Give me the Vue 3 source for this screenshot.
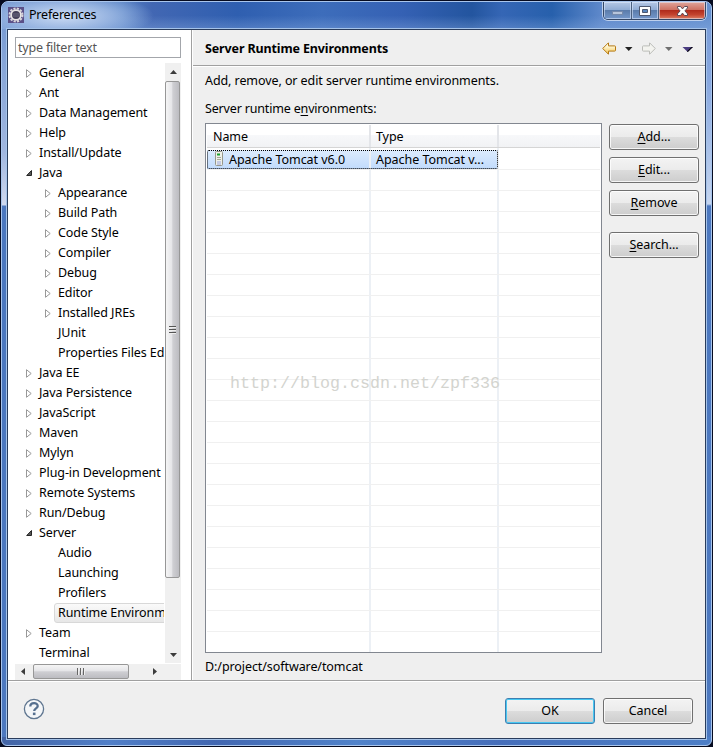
<script setup>
const tree = [
  { label: 'General', state: 'closed' },
  { label: 'Ant', state: 'closed' },
  { label: 'Data Management', state: 'closed' },
  { label: 'Help', state: 'closed' },
  { label: 'Install/Update', state: 'closed' },
  { label: 'Java', state: 'open' },
  { label: 'Appearance', state: 'closed', child: true },
  { label: 'Build Path', state: 'closed', child: true },
  { label: 'Code Style', state: 'closed', child: true },
  { label: 'Compiler', state: 'closed', child: true },
  { label: 'Debug', state: 'closed', child: true },
  { label: 'Editor', state: 'closed', child: true },
  { label: 'Installed JREs', state: 'closed', child: true },
  { label: 'JUnit', child: true },
  { label: 'Properties Files Editor', child: true },
  { label: 'Java EE', state: 'closed' },
  { label: 'Java Persistence', state: 'closed' },
  { label: 'JavaScript', state: 'closed' },
  { label: 'Maven', state: 'closed' },
  { label: 'Mylyn', state: 'closed' },
  { label: 'Plug-in Development', state: 'closed' },
  { label: 'Remote Systems', state: 'closed' },
  { label: 'Run/Debug', state: 'closed' },
  { label: 'Server', state: 'open' },
  { label: 'Audio', child: true },
  { label: 'Launching', child: true },
  { label: 'Profilers', child: true },
  { label: 'Runtime Environments', child: true, selected: true },
  { label: 'Team', state: 'closed' },
  { label: 'Terminal' },
]
const actions = [
  { key: 'A', rest: 'dd...' },
  { key: 'E', rest: 'dit...' },
  { key: 'R', rest: 'emove' },
  { key: 'S', rest: 'earch...', apart: true },
]
const emptyRows = 23
</script>

<template>
  <div class="desktop">
    <div class="window">
      <header class="titlebar">
        <svg class="app-icon" width="16" height="16" viewBox="0 0 16 16">
          <rect width="16" height="16" fill="#5a5088" />
          <circle cx="8" cy="8" r="6.5" fill="none" stroke="#d9d7dc" stroke-width="2" stroke-dasharray="2.2 1.2" />
          <circle cx="8" cy="8" r="4.9" fill="#45415a" stroke="#e8e5e5" stroke-width="1.8" />
          <path d="M4.3 7h7.4M4.3 9h7.4" stroke="#77758a" stroke-width=".8" />
        </svg>
        <span class="title">Preferences</span>
        <div class="caption">
          <span class="cap min"><svg width="28" height="18"><rect x="8.5" y="9.5" width="10" height="3" fill="#b7c5db" stroke="#7589ab" /></svg></span>
          <span class="cap max"><svg width="26" height="18"><path d="M7.5 4.5h11v9h-11z" fill="#fff" stroke="#4e5870" /><path d="M10.5 7.5h5v3h-5z" fill="#5785bd" stroke="#4e5870" /></svg></span>
          <span class="cap close"><svg width="47" height="18"><path d="M18.5 4.5h3l2 2.4 2-2.4h3v1.4l-2.6 3 2.6 3v1.6h-3l-2-2.4-2 2.4h-3v-1.6l2.6-3-2.6-3z" fill="#fff" stroke="#5d4954" /></svg></span>
        </div>
      </header>

      <div class="client">
        <div class="main">
          <aside class="side">
            <div class="filter">type filter text</div>
            <div class="tree-area">
              <div class="tree">
                <div v-for="n in tree" :key="n.label" class="node" :class="{ child: n.child }">
                  <span class="twisty">
                    <svg v-if="n.state === 'closed'" width="7" height="9"><path d="M.5.7v7.6L5.2 4.5z" fill="#fff" stroke="#989898" /></svg>
                    <svg v-else-if="n.state === 'open'" width="7" height="9"><path d="M5.5 1.5v5H.7z" fill="#595959" stroke="#262626" /></svg>
                  </span>
                  <span class="label" :class="{ selected: n.selected }">{{ n.label }}</span>
                </div>
              </div>
              <div class="vscroll">
                <span class="btn-arrow"><svg width="7" height="4"><path d="M0 4 3.5 0 7 4z" fill="#3c3c3c" /></svg></span>
                <div class="vthumb"><i /><i /><i /></div>
                <span class="btn-arrow last"><svg width="7" height="4"><path d="M0 0h7L3.5 4z" fill="#3c3c3c" /></svg></span>
              </div>
            </div>
            <div class="hscroll-row">
              <div class="hscroll">
                <span class="h-arrow"><svg width="4" height="7"><path d="M4 0v7L0 3.5z" fill="#3c3c3c" /></svg></span>
                <div class="hthumb"><i /><i /><i /></div>
                <span class="h-arrow right"><svg width="4" height="7"><path d="M0 0v7l4-3.5z" fill="#3c3c3c" /></svg></span>
              </div>
            </div>
          </aside>

          <section class="page">
            <div class="page-head">
              <h1>Server Runtime Environments</h1>
              <svg class="nav" width="94" height="14" viewBox="0 0 94 14">
                <defs>
                  <linearGradient id="gold" x2="0" y2="1"><stop offset=".25" stop-color="#fffbe0" /><stop offset="1" stop-color="#f3c24e" /></linearGradient>
                </defs>
                <path d="M.7 6.5 6.3.9h.2v3h6.2q.8 0 .8.8v3.6q0 .8-.8.8H6.5v3h-.2z" fill="url(#gold)" stroke="#b57912" />
                <path d="M23 5h7.5l-3.75 4z" fill="#222" />
                <path d="M53.3 6.5 47.7.9h-.2v3h-6.2q-.8 0-.8.8v3.6q0 .8.8.8h6.2v3h.2z" fill="#f3f3ef" stroke="#bbbcb8" />
                <path d="M63 5h7.5l-3.75 4z" fill="#707070" />
                <path d="M80.5 5h10.5l-5.25 5z" fill="#4a3c80" />
                <path d="m85 9.3 4.5-4.3h1.5l-5.25 5z" fill="#050508" />
              </svg>
            </div>
            <div class="page-body">
              <p class="intro">Add, remove, or edit server runtime environments.</p>
              <p class="caption-label">Server runtime e<u>n</u>vironments:</p>
              <div class="content">
                <div class="table">
                  <div class="row head"><span class="cell">Name</span><span class="cell">Type</span><span class="cell" /></div>
                  <div class="row picked">
                    <span class="cell">
                      <svg width="9" height="16" viewBox="0 0 9 16">
                        <rect x=".5" y=".5" width="7" height="14" rx="1" fill="#eef0e8" stroke="#97978a" />
                        <path d="M2 2.5h3v2H2z" fill="#18a02d" /><path d="M2 6.5h4M2 8.5h4" stroke="#a5a898" />
                        <path d="M2 10h4v4H2z" fill="#c4cae3" />
                      </svg>
                      <span class="value">Apache Tomcat v6.0</span>
                    </span>
                    <span class="cell value2">Apache Tomcat v...</span>
                    <span class="cell" />
                    <span class="focus" />
                  </div>
                  <div v-for="i in emptyRows" :key="i" class="row"><span class="cell" /><span class="cell" /><span class="cell" /></div>
                  <span class="watermark">http://blog.csdn.net/zpf336</span>
                </div>
                <div class="actions">
                  <button v-for="a in actions" :key="a.key" :class="{ apart: a.apart }"><span><u>{{ a.key }}</u>{{ a.rest }}</span></button>
                </div>
              </div>
              <p class="path">D:/project/software/tomcat</p>
            </div>
          </section>
        </div>

        <footer class="footer">
          <svg class="help" width="22" height="22" viewBox="0 0 22 22">
            <circle cx="11" cy="11" r="9.6" fill="#f4f6f8" stroke="#5f7690" stroke-width="1.3" />
            <path d="M7.3 8.6c0-4.6 7.6-4.4 7.4-.5-.1 2.3-3.5 2.4-3.5 5" fill="none" stroke="#56708f" stroke-width="2.3" />
            <rect x="9.9" y="14.6" width="2.6" height="2.5" fill="#56708f" />
          </svg>
          <button class="default"><span>OK</span></button>
          <button><span>Cancel</span></button>
        </footer>
      </div>
    </div>
  </div>
</template>

<style>
body { margin: 0; overflow: hidden; }
</style>

<style scoped>
* { box-sizing: border-box; }
p, h1 { margin: 0; font-weight: normal; }
svg { display: block; flex: none; }
.desktop { width: 713px; height: 747px; background: #060b20; font: 12.5px/20px "Noto Sans", "Noto Sans CJK SC", sans-serif; letter-spacing: -.08px; color: #000; padding: 1px; }
.window {
  height: 745px; border: 1px solid #a9c5ec; border-radius: 7px 7px 6px 6px; padding: 0 5px 6px; overflow: hidden;
  background:
    linear-gradient(#7195cf 0, #86a5d8 60px, #a0b6df 150px, #d0d9ef 203px, transparent 204px) left / 6px 100% no-repeat,
    linear-gradient(#7599d5 0, #87a7df 80px, #c5d5ef 202px, transparent 204px) right / 6px 100% no-repeat,
    linear-gradient(90deg, #4364a5, #517fc8 15%, #4267b1 30%, #5183ca 50%, #466eba 70%, #4d7fc7) bottom / 100% 8px no-repeat,
    #4c78bf;
}
.titlebar {
  display: flex; height: 27px; margin: 0 -5px; padding-left: 6px;
  background:
    radial-gradient(ellipse 90px 24px at 62px 14px, rgba(211,225,246,.95), rgba(170,195,233,.7) 55%, transparent),
    linear-gradient(rgba(255,255,255,0) 50%, rgba(145,178,228,.35)),
    linear-gradient(90deg, #6f94cf 0, #5580c4 120px, #4267b3 150px, #2f5fb0 235px, #3d6dbb 320px, #3561b4 400px, #23559f 470px, #3566b5 500px, #2760ac 550px, #5f89cb 600px, #6590cf);
}
.app-icon { margin-top: 5px; }
.title { margin: 3px 0 0 5px; letter-spacing: -.2px; }
.caption { display: flex; height: 18px; margin-left: auto; margin-right: 5px; border: 1px solid #344766; border-top: 0; border-radius: 0 0 5px 5px; box-shadow: 0 0 0 1px #bed0ed; overflow: hidden; }
.cap { display: flex; justify-content: center; border-right: 1px solid #4b607f; background: linear-gradient(#b5c7e5, #8eaad3 48%, #5b7cab 50%, #7598cb); box-shadow: inset 0 0 0 1px rgba(225,237,255,.55); }
.min { width: 28px; }
.max { width: 27px; }
.cap.close { width: 46px; border: 0; background: linear-gradient(#e0a69c, #cd6f60 47%, #b02c1d 50%, #c4442f 75%, #dd8167); }
.client { height: 710px; border: 1px solid #293c5c; background: #efefef; box-shadow: 0 0 0 1px #a5c3e9; display: flex; flex-direction: column; }
.main { display: flex; height: 651px; border-bottom: 1px solid #a0a0a0; box-shadow: 0 1px #fff; }
.side { width: 184px; flex: none; background: #fff; border-right: 1px solid #a0a0a0; padding: 7px 0 0 7px; }
.filter { width: 166px; height: 21px; border: 1px solid #a3a6ab; line-height: 20px; padding-left: 2px; color: #555; letter-spacing: -.2px; }
.tree-area { display: flex; height: 600px; margin-top: 5px; }
.tree { width: 149px; overflow: hidden; }
.node { display: flex; height: 20px; padding-left: 11px; white-space: nowrap; }
.child { padding-left: 30px; }
.twisty { width: 9px; flex: none; padding-top: 6px; }
.label { padding-left: 4px; line-height: 19px; }
.selected { width: 130px; flex: none; padding-left: 3px; border: 1px solid #d8d8d8; border-radius: 3px; background: linear-gradient(#fafafa, #e7e7e7); line-height: 17px; }
.vscroll { width: 16px; margin-left: 1px; background: #f0f0f0; display: flex; flex-direction: column; }
.btn-arrow { height: 18px; display: flex; justify-content: center; padding-top: 7px; }
.btn-arrow.last { margin-top: auto; height: 14px; padding-top: 4px; }
.vthumb { height: 497px; width: 15px; border: 1px solid #979797; border-radius: 2px; background: linear-gradient(90deg, #f5f5f5, #e5e5e8 45%, #cfcfd3 52%, #bcbcc1); display: flex; flex-direction: column; justify-content: center; align-items: center; gap: 1px; }
.vthumb i { width: 7px; height: 2px; background: #555; border-bottom: 1px solid #eee; }
.hscroll-row { margin-top: 1px; width: 166px; height: 16px; background: #f0f0f0; }
.hscroll { width: 149px; display: flex; height: 16px; }
.h-arrow { width: 18px; padding: 4px 0 0 6px; }
.h-arrow.right { margin-left: auto; width: 11px; padding-left: 0; }
.hthumb { width: 96px; height: 15px; border: 1px solid #979797; border-radius: 2px; background: linear-gradient(#f5f5f5, #e5e5e8 45%, #cfcfd3 52%, #bcbcc1); display: flex; align-items: center; justify-content: center; gap: 1px; }
.hthumb i { height: 7px; width: 2px; background: #666; border-right: 1px solid #eee; }
.page { flex: 1; min-width: 0; border-left: 1px solid #fff; }
.page-head { height: 36px; border-bottom: 1px solid #a0a0a0; box-shadow: 0 1px #fff; display: flex; padding: 0 9px 0 12px; }
.page-head h1 { font-weight: bold; font-size: 12.5px; line-height: 38px; letter-spacing: -.13px; }
.nav { margin: 12px 0 0 auto; }
.page-body { padding: 5px 6px 0 12px; }
.intro, .caption-label { white-space: nowrap; }
.caption-label { margin-top: 8px; letter-spacing: -.17px; }
.content { display: flex; margin-top: 4px; }
.table { position: relative; width: 397px; height: 530px; border: 1px solid #828790; background: #fff; padding: 1px 1px 0; overflow: hidden; flex: none; }
.row { position: relative; display: flex; height: 21px; border-bottom: 1px solid #f0f0f0; }
.cell { width: 128px; border-right: 2px solid #ecf0f5; white-space: nowrap; display: flex; }
.cell:first-child { width: 164px; }
.cell:nth-child(3) { flex: 1; border: 0; }
.head { height: 23px; background: linear-gradient(#fff 44%, #f7f8fa 45%, #f1f2f4); border-color: #d5d5d5; line-height: 24px; }
.head .cell { padding-left: 6px; border-color: #e3e5e9; }
.head .cell:nth-child(2), .value2 { padding-left: 5px; }
.picked { height: 22px; background: linear-gradient(#dcebfd, #c1dbfc) 0 2px / 290px 19px no-repeat; line-height: 23px; letter-spacing: -.04px; }
.picked .cell:first-child { padding-left: 8px; }
.picked svg { margin-top: 3px; }
.value { padding-left: 5px; }
.focus { position: absolute; left: 0; top: 2px; width: 291px; height: 19px; border: 1px dotted #000; border-radius: 2px; }
.watermark { position: absolute; left: 24px; top: 250px; font: 16.67px/20px "Liberation Mono", monospace; letter-spacing: 0; color: #d3d4cf; white-space: nowrap; }
.actions { margin: 1px 0 0 7px; display: flex; flex-direction: column; gap: 7px; }
button { width: 90px; height: 26px; padding: 0; margin: 0; font: inherit; line-height: 20px; letter-spacing: inherit; color: #000; border: 1px solid #707070; border-radius: 3px; background: linear-gradient(#f3f3f3, #ebebeb 50%, #dcdcdc 51%, #cdcdcd); box-shadow: inset 0 0 0 1px rgba(255,255,255,.8); }
.apart { margin-top: 9px; }
u { text-underline-offset: 2px; text-decoration-thickness: 1px; text-decoration-skip-ink: none; }
.path { margin-top: 4px; }
.footer { display: flex; padding: 17px 12px 0 15px; gap: 8px; }
.help { margin-right: auto; }
.default { border-color: #3c7fb1; box-shadow: inset 0 0 0 1px #48c8f2; }
</style>
